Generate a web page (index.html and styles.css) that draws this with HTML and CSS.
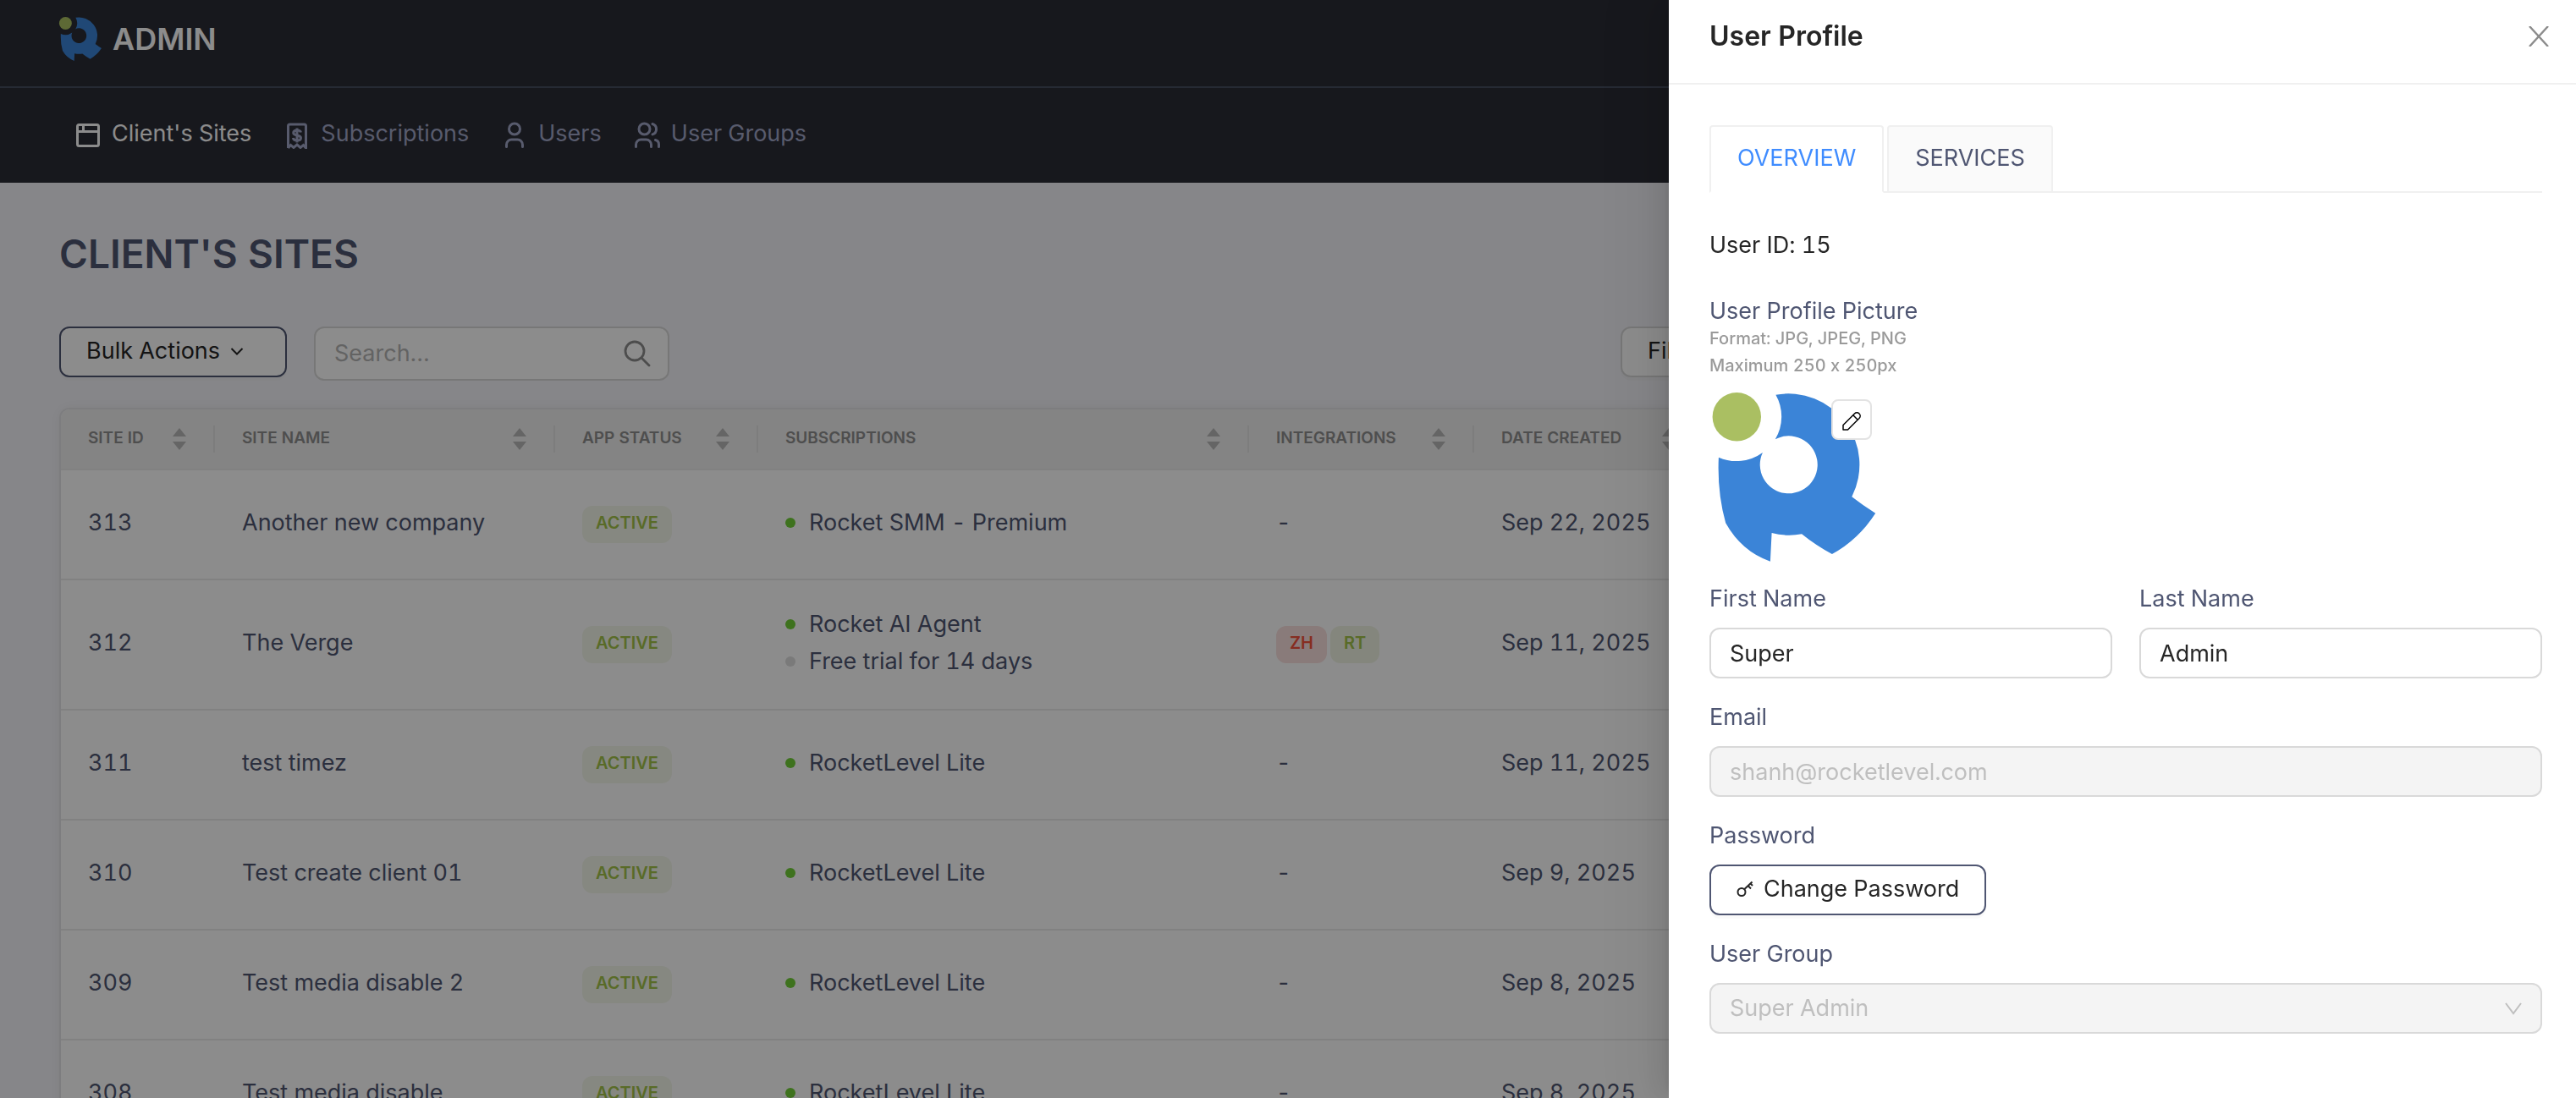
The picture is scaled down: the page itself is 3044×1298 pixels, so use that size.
FILE: index.html
```
<!DOCTYPE html>
<html lang="en">
<head>
  <meta charset="UTF-8" />
  <meta name="viewport" content="width=device-width, initial-scale=1.0"/>
  <title>Admin - Client's Sites</title>
  <link rel="stylesheet" href="styles.css">
</head>
<body>

<!-- shared shapes -->
<svg class="sprite" aria-hidden="true">
  <symbol id="logo" viewBox="0 0 208 208">
    <circle cx="32.3" cy="32.7" r="28.7" fill="#aabf62"/>
    <path fill="#3b84d7" d="M78.4 6.7A84 84 0 0 1 168.3 127.3Q182 138 196.2 146.7Q176 178 144.9 195Q126 185 109.1 171.3A84 84 0 0 1 73.6 170L71.9 203.7Q38 192 19.2 158.3Q9 122 10.9 80.7A52.5 52.5 0 0 0 62.9 75A34 34 0 1 0 77.8 59.3A52.5 52.5 0 0 0 78.4 6.7Z"/>
  </symbol>
  <symbol id="sort" viewBox="0 0 16 26">
    <path d="M8 0L16 10H0zM0 16H16L8 26z" fill="currentColor"/>
  </symbol>
</svg>

<header class="header">
  <div class="brand">
    <svg class="brand-logo"><use href="#logo"/></svg>
    <span>ADMIN</span>
  </div>
  <nav class="nav">
    <a class="nav-item active" href="#">
      <svg viewBox="0 0 32 32" fill="none" stroke="currentColor" stroke-width="3"><rect x="3.5" y="3.5" width="25" height="25" rx="2"/><path d="M3 11.5H29M10.5 3V11"/></svg>
      Client's Sites
    </a>
    <a class="nav-item" href="#">
      <svg viewBox="0 0 32 32" fill="none" stroke="currentColor" stroke-width="3"><path d="M5.5 31V5a2 2 0 0 1 2-2H24.5a2 2 0 0 1 2 2V31L23.5 27.5L20 30.5L16 27L12 30.5L8.5 27.5L5.5 31"/><path d="M20.5 12.5C20 10.5 18.5 10 16 10c-2.6 0-4.3 1-4.3 3c0 4 8.8 2 8.8 6c0 2-1.8 3-4.5 3c-2.7 0-4.3-.8-4.7-3M16 7.5v17"/></svg>
      Subscriptions
    </a>
    <a class="nav-item" href="#">
      <svg viewBox="0 0 32 32" fill="none" stroke="currentColor" stroke-width="3" stroke-linecap="round"><circle cx="16" cy="8.5" r="6.5"/><path d="M6.5 29.5V27a6 6 0 0 1 6-6h7a6 6 0 0 1 6 6v2.5"/></svg>
      Users
    </a>
    <a class="nav-item" href="#">
      <svg viewBox="0 0 32 32" fill="none" stroke="currentColor" stroke-width="3" stroke-linecap="round"><circle cx="12.5" cy="8.5" r="6.5"/><path d="M2.5 29.5V27a6 6 0 0 1 6-6h6a6 6 0 0 1 6 6v2.5M22 2.5a6.5 6.5 0 0 1 0 12.4M25.5 21.5a5.500 5.500 0 0 1 4 5.500v2.500"/></svg>
      User Groups
    </a>
  </nav>
</header>

<main class="content">
  <h1>CLIENT'S SITES</h1>

  <div class="toolbar">
    <button class="btn btn-dark btn-bulk">Bulk Actions
      <svg viewBox="0 0 16 16" width="16" height="16" fill="none" stroke="currentColor" stroke-width="2"><path d="M1.5 5L8 11.5L14.5 5"/></svg>
    </button>
    <div class="search">
      <input type="text" placeholder="Search…" aria-label="Search">
      <svg viewBox="0 0 32 32" width="32" height="32" fill="none" stroke="currentColor" stroke-width="2.8" stroke-linecap="round"><circle cx="13" cy="13" r="11"/><path d="M21 21L30 30"/></svg>
    </div>
    <div class="filters">
      <button class="btn">Filter</button>
    </div>
  </div>

  <table class="sites">
    <colgroup>
      <col class="c-id"><col class="c-name"><col class="c-status"><col class="c-subs"><col class="c-int"><col class="c-date"><col>
    </colgroup>
    <thead>
      <tr>
        <th><div class="head"><span>SITE ID</span><svg class="sort"><use href="#sort"/></svg></div></th>
        <th><div class="head"><span>SITE NAME</span><svg class="sort"><use href="#sort"/></svg></div></th>
        <th><div class="head"><span>APP STATUS</span><svg class="sort"><use href="#sort"/></svg></div></th>
        <th><div class="head"><span>SUBSCRIPTIONS</span><svg class="sort"><use href="#sort"/></svg></div></th>
        <th><div class="head"><span>INTEGRATIONS</span><svg class="sort"><use href="#sort"/></svg></div></th>
        <th><div class="head"><span>DATE CREATED</span><svg class="sort"><use href="#sort"/></svg></div></th>
        <th></th>
      </tr>
    </thead>
    <tbody>
      <tr>
        <td>313</td>
        <td>Another new company</td>
        <td class="tags"><span class="tag green">ACTIVE</span></td>
        <td><div class="sub">Rocket SMM - Premium</div></td>
        <td>-</td>
        <td>Sep 22, 2025</td>
        <td></td>
      </tr>
      <tr>
        <td>312</td>
        <td>The Verge</td>
        <td class="tags"><span class="tag green">ACTIVE</span></td>
        <td><div class="sub">Rocket AI Agent</div><div class="sub off">Free trial for 14 days</div></td>
        <td class="tags"><div class="tag-list"><span class="tag red">ZH</span><span class="tag lime">RT</span></div></td>
        <td>Sep 11, 2025</td>
        <td></td>
      </tr>
      <tr>
        <td>311</td>
        <td>test timez</td>
        <td class="tags"><span class="tag green">ACTIVE</span></td>
        <td><div class="sub">RocketLevel Lite</div></td>
        <td>-</td>
        <td>Sep 11, 2025</td>
        <td></td>
      </tr>
      <tr>
        <td>310</td>
        <td>Test create client 01</td>
        <td class="tags"><span class="tag green">ACTIVE</span></td>
        <td><div class="sub">RocketLevel Lite</div></td>
        <td>-</td>
        <td>Sep 9, 2025</td>
        <td></td>
      </tr>
      <tr>
        <td>309</td>
        <td>Test media disable 2</td>
        <td class="tags"><span class="tag green">ACTIVE</span></td>
        <td><div class="sub">RocketLevel Lite</div></td>
        <td>-</td>
        <td>Sep 8, 2025</td>
        <td></td>
      </tr>
      <tr>
        <td>308</td>
        <td>Test media disable</td>
        <td class="tags"><span class="tag green">ACTIVE</span></td>
        <td><div class="sub">RocketLevel Lite</div></td>
        <td>-</td>
        <td>Sep 8, 2025</td>
        <td></td>
      </tr>
    </tbody>
  </table>
</main>

<div class="mask"></div>

<aside class="drawer" role="dialog" aria-labelledby="drawerTitle">
  <div class="drawer-header">
    <h2 id="drawerTitle">User Profile</h2>
    <button class="close" aria-label="Close">
      <svg viewBox="0 0 24 24" width="24" height="24" fill="none" stroke="currentColor" stroke-width="2.4"><path d="M1 0L23 24M23 0L1 24"/></svg>
    </button>
  </div>

  <div class="drawer-body">
    <div class="tabs" role="tablist">
      <button class="tab active" role="tab" aria-selected="true">OVERVIEW</button>
      <button class="tab" role="tab" aria-selected="false">SERVICES</button>
    </div>

    <p class="user-id">User ID: 15</p>

    <div class="picture">
      <p class="picture-label">User Profile Picture</p>
      <p class="hint">Format: JPG, JPEG, PNG</p>
      <p class="hint">Maximum 250 x 250px</p>
      <div class="avatar">
        <svg class="avatar-img"><use href="#logo"/></svg>
        <button class="edit" aria-label="Edit picture">
          <svg viewBox="0 0 22 22" width="22" height="22" fill="none" stroke="currentColor" stroke-width="1.5" stroke-linejoin="round"><path d="M1 21V15.5L14.5 2a3.700 3.700 0 0 1 5.500 5.500L6.500 21zM12.800 3.800L18.200 9.200"/></svg>
        </button>
      </div>
    </div>

    <form class="form">
      <div class="row">
        <div class="field">
          <label for="firstName">First Name</label>
          <input type="text" id="firstName" value="Super">
        </div>
        <div class="field">
          <label for="lastName">Last Name</label>
          <input type="text" id="lastName" value="Admin">
        </div>
      </div>
      <div class="field">
        <label for="email">Email</label>
        <input type="email" id="email" value="shanh@rocketlevel.com" disabled>
      </div>
      <div class="field">
        <label for="btnPassword">Password</label>
        <button type="button" class="btn btn-dark" id="btnPassword">
          <svg viewBox="0 0 20 20" width="20" height="20" fill="none" stroke="currentColor" stroke-width="2"><circle cx="6" cy="13.5" r="4.5"/><path d="M9.2 10.3L18.5 1.5M13.5 6L17 9.500M16.500 3.500L19 6"/></svg>
          Change Password
        </button>
      </div>
      <div class="field">
        <label for="userGroup">User Group</label>
        <div class="select">
          <select id="userGroup" disabled>
            <option>Super Admin</option>
          </select>
          <svg viewBox="0 0 20 20" width="20" height="20" fill="none" stroke="currentColor" stroke-width="2"><path d="M1 4L10 16L19 4"/></svg>
        </div>
      </div>
    </form>
  </div>
</aside>

</body>
</html>
```
FILE: styles.css
```
:root {
  --bg: #f5f5fa;
  --dark: #2a2c35;
  --text: #4f5672;
  --ink: #262626;
  --border: #d9d9d9;
  --line: #f0f0f0;
  --muted: #bfbfbf;
}
* {
  box-sizing: border-box;
}
body {
  margin: 0;
  font-family: Inter, Roboto, sans-serif;
  font-size: 27px;
  line-height: 44px;
  font-feature-settings: "calt" 0;
  font-variant-numeric: tabular-nums;
  background: var(--bg);
  color: var(--text);
  overflow: hidden;
}
button, input, select {
  font: inherit;
}
h1, h2, p {
  margin: 0;
}
.sprite {
  display: none;
}

/* header */
.header {
  background: var(--dark);
}
.brand {
  display: flex;
  align-items: center;
  gap: 10px;
  height: 104px;
  padding: 0 69px 10px;
  border-bottom: 2px solid #454e60;
  color: #fff;
  font-size: 36px;
  font-weight: 600;
}
.brand-logo {
  width: 54px;
  height: 54px;
}
.nav {
  display: flex;
  align-items: center;
  gap: 38px;
  height: 112px;
  padding: 0 88px 4px;
}
.nav-item {
  display: flex;
  align-items: center;
  gap: 12px;
  color: #a0a6c6;
  text-decoration: none;
}
.nav-item.active {
  color: #fff;
}
.nav-item svg {
  width: 32px;
  height: 32px;
  margin-top: 4px;
}

/* content */
.content {
  padding: 52px 70px;
}
h1 {
  font-size: 46px;
  font-weight: 600;
  line-height: 64px;
}
.toolbar {
  display: flex;
  align-items: flex-start;
  gap: 32px;
  margin: 54px 0 32px;
}
.btn {
  display: flex;
  align-items: center;
  gap: 12px;
  height: 60px;
  padding: 0 30px 2px;
  border: 2px solid var(--border);
  border-radius: 12px;
  background: #fff;
  color: var(--ink);
  box-shadow: 0 4px 0 rgba(0,0,0,0.02);
}
.btn-dark {
  border-color: var(--text);
}
.btn-bulk {
  width: 269px;
}
.search {
  display: flex;
  align-items: center;
  width: 420px;
  height: 64px;
  padding: 0 20px 0 22px;
  border: 2px solid var(--border);
  border-radius: 12px;
  background: #fff;
  color: #8c8c8c;
}
.search input {
  flex: 1;
  min-width: 0;
  padding: 0;
  border: none;
  outline: none;
  background: none;
}
.search input::placeholder {
  color: #b5b5b5;
}
.filters {
  display: flex;
  width: 1059px;
  margin-left: auto;
}

/* table */
.sites {
  width: 100%;
  table-layout: fixed;
  border: 2px solid #e4e4e8;
  border-radius: 12px;
  border-spacing: 0;
  background: #fff;
  overflow: hidden;
  box-shadow: 0 0 16px rgba(0,0,0,0.06);
}
.c-id { width: 182px; }
.c-name { width: 402px; }
.c-status { width: 240px; }
.c-subs { width: 580px; }
.c-int { width: 266px; }
.c-date { width: 272px; }
th {
  height: 72px;
  padding: 0 0 0 32px;
  background: #f0f0f0;
  border-bottom: 2px solid #ececec;
  color: #8f8f8f;
  font-size: 19px;
  font-weight: 600;
  line-height: 28px;
}
.head {
  display: flex;
  align-items: center;
  justify-content: space-between;
  height: 32px;
  padding-right: 32px;
  border-right: 2px solid #e4e4e4;
}
.head span {
  padding-bottom: 2px;
}
.sort {
  width: 16px;
  height: 26px;
  color: #b8b8b8;
}
td {
  height: 130px;
  padding: 30px 0 34px 32px;
  border-bottom: 2px solid #ececec;
}
td.tags {
  padding: 32px 0 32px 32px;
}
.sub {
  display: flex;
  align-items: center;
  gap: 16px;
}
.sub::before {
  content: "";
  width: 12px;
  height: 12px;
  border-radius: 50%;
  background: #72cf38;
}
.sub.off::before {
  background: #dedede;
}
.tag-list {
  display: flex;
  gap: 4px;
}
.tag {
  display: block;
  width: fit-content;
  padding: 0 16px 4px;
  border-radius: 12px;
  font-size: 20px;
  font-weight: 600;
  line-height: 40px;
}
.tag.green {
  background: #f4f7ec;
  color: #a2c44a;
}
.tag.red {
  background: #fae0de;
  color: #f5533d;
}
.tag.lime {
  background: #f1f5e4;
  color: #a2c44a;
}

/* drawer */
.mask {
  position: fixed;
  inset: 0;
  background: rgba(0,0,0,0.45);
}
.drawer {
  position: fixed;
  top: 0;
  right: 0;
  bottom: 0;
  width: 1072px;
  background: #fff;
  box-shadow: -12px 0 32px rgba(0,0,0,0.08), -6px 0 12px -8px rgba(0,0,0,0.12), -18px 0 56px 16px rgba(0,0,0,0.05);
}
.drawer-header {
  display: flex;
  align-items: center;
  justify-content: space-between;
  height: 100px;
  padding: 0 32px 12px 48px;
  border-bottom: 2px solid var(--line);
}
h2 {
  color: var(--ink);
  font-size: 32px;
  font-weight: 600;
}
.close {
  display: flex;
  padding: 0;
  border: none;
  background: none;
  color: #8c8c8c;
}
.drawer-body {
  padding: 48px 40px 48px 48px;
}
.tabs {
  display: flex;
  gap: 4px;
  border-bottom: 2px solid var(--line);
}
.tab {
  height: 80px;
  margin-bottom: -2px;
  padding: 0 31px 2px;
  border: 2px solid var(--line);
  border-radius: 4px 4px 0 0;
  background: #fafafa;
  color: var(--text);
}
.tab.active {
  border-bottom-color: #fff;
  background: #fff;
  color: #3f8cff;
}
.user-id {
  margin: 40px 0;
  color: var(--ink);
}
.picture-label {
  line-height: 32px;
}
.hint {
  color: #9a9a9a;
  font-size: 20px;
  font-weight: 500;
  line-height: 32px;
}
.avatar {
  position: relative;
  width: 208px;
  height: 208px;
  margin: 12px 0 18px;
}
.avatar-img {
  width: 208px;
  height: 208px;
}
.edit {
  position: absolute;
  top: 12px;
  right: 16px;
  display: flex;
  align-items: center;
  justify-content: center;
  width: 48px;
  height: 48px;
  padding: 4px 0 0;
  border: 2px solid #e3e3e3;
  border-radius: 8px;
  background: #fff;
  color: #000;
}
.form {
  display: flex;
  flex-direction: column;
  gap: 24px;
}
.row {
  display: flex;
  gap: 32px;
}
.field {
  flex: 1;
  display: flex;
  flex-direction: column;
  align-items: flex-start;
  gap: 12px;
}
.field input, .select select {
  width: 100%;
  height: 60px;
  padding: 0 22px;
  border: 2px solid var(--border);
  border-radius: 12px;
  background: #fff;
  color: var(--ink);
}
.field input:disabled, .select select:disabled {
  background: #f4f4f4;
  color: var(--muted);
  opacity: 1;
}
.select {
  position: relative;
  width: 100%;
}
.select select {
  display: block;
  appearance: none;
}
.select svg {
  position: absolute;
  top: 20px;
  right: 24px;
  color: var(--muted);
  pointer-events: none;
}
```
